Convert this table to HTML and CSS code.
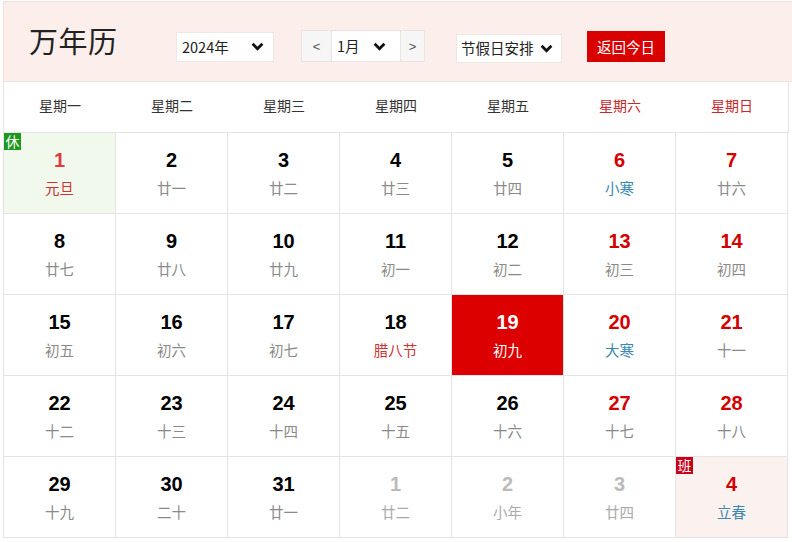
FILE: index.html
```html
<!DOCTYPE html>
<html lang="zh">
<head>
<meta charset="utf-8">
<link rel="stylesheet" href="styles.css">
</head>
<body>
<div class="cal">
  <div class="head">
    <div class="title">万年历</div>
    <div class="sel year"><span>2024年</span><svg class="chev" viewBox="0 0 12 8"><path d="M1.5 1.5 L6 6 L10.5 1.5"/></svg></div>
    <div class="group">
      <div class="arrow">&lt;</div>
      <div class="sel month"><span>1月</span><svg class="chev" viewBox="0 0 12 8"><path d="M1.5 1.5 L6 6 L10.5 1.5"/></svg></div>
      <div class="arrow">&gt;</div>
    </div>
    <div class="sel holiday"><span>节假日安排</span><svg class="chev" viewBox="0 0 12 8"><path d="M1.5 1.5 L6 6 L10.5 1.5"/></svg></div>
    <div class="today-btn">返回今日</div>
  </div>
  <div class="week">
    <div>星期一</div><div>星期二</div><div>星期三</div><div>星期四</div><div>星期五</div><div class="we">星期六</div><div class="we">星期日</div>
  </div>
  <div class="days">
    <div class="d rest"><span class="badge xiu">休</span><b class="hol">1</b><i class="fest">元旦</i></div>
    <div class="d"><b>2</b><i>廿一</i></div>
    <div class="d"><b>3</b><i>廿二</i></div>
    <div class="d"><b>4</b><i>廿三</i></div>
    <div class="d"><b>5</b><i>廿四</i></div>
    <div class="d wk"><b>6</b><i class="term">小寒</i></div>
    <div class="d wk"><b>7</b><i>廿六</i></div>

    <div class="d"><b>8</b><i>廿七</i></div>
    <div class="d"><b>9</b><i>廿八</i></div>
    <div class="d"><b>10</b><i>廿九</i></div>
    <div class="d"><b>11</b><i>初一</i></div>
    <div class="d"><b>12</b><i>初二</i></div>
    <div class="d wk"><b>13</b><i>初三</i></div>
    <div class="d wk"><b>14</b><i>初四</i></div>

    <div class="d"><b>15</b><i>初五</i></div>
    <div class="d"><b>16</b><i>初六</i></div>
    <div class="d"><b>17</b><i>初七</i></div>
    <div class="d"><b>18</b><i class="fest">腊八节</i></div>
    <div class="d cur"><b>19</b><i>初九</i></div>
    <div class="d wk"><b>20</b><i class="term">大寒</i></div>
    <div class="d wk"><b>21</b><i>十一</i></div>

    <div class="d"><b>22</b><i>十二</i></div>
    <div class="d"><b>23</b><i>十三</i></div>
    <div class="d"><b>24</b><i>十四</i></div>
    <div class="d"><b>25</b><i>十五</i></div>
    <div class="d"><b>26</b><i>十六</i></div>
    <div class="d wk"><b>27</b><i>十七</i></div>
    <div class="d wk"><b>28</b><i>十八</i></div>

    <div class="d"><b>29</b><i>十九</i></div>
    <div class="d"><b>30</b><i>二十</i></div>
    <div class="d"><b>31</b><i>廿一</i></div>
    <div class="d other"><b>1</b><i>廿二</i></div>
    <div class="d other"><b>2</b><i>小年</i></div>
    <div class="d other"><b>3</b><i>廿四</i></div>
    <div class="d work wk"><span class="badge ban">班</span><b>4</b><i class="term">立春</i></div>
  </div>
</div>
</body>
</html>
```

FILE: styles.css
```css
html, body {
  margin: 0;
  padding: 0;
  background: #fff;
  overflow: hidden;
}
body {
  width: 792px;
  height: 542px;
  font-family: "Noto Sans CJK SC", "Liberation Sans", sans-serif;
  color: #333;
}
.cal {
  margin: 1px 0 0 3px;
  width: 785px;
}
.head {
  box-sizing: border-box;
  width: 800px;
  height: 81px;
  background: #fbeeeb;
  border: 1px solid #f1e2df;
  border-right: none;
  display: flex;
  align-items: center;
  padding: 10px 0 0 25px;
}
.title {
  font-size: 29px;
  color: #222;
  line-height: 40px;
  margin-top: -13px;
  width: 147px;
  letter-spacing: 0.5px;
}
.sel {
  box-sizing: border-box;
  background: #fff;
  height: 30px;
  display: flex;
  align-items: center;
  justify-content: space-between;
  font-size: 14px;
  color: #222;
  padding: 0 9px 0 5px;
}
.sel span { line-height: 20px; }
.chev {
  width: 13px;
  height: 9px;
  fill: none;
  stroke: #111;
  stroke-width: 2.6;
}
.year {
  width: 98px;
  border: 1px solid #f0e6e4;
  font-size: 14.5px;
}
.group {
  margin-left: 27px;
  display: flex;
  height: 30px;
  border: 1px solid #ebe4e3;
  margin-top: -1px;
}
.arrow {
  width: 29px;
  background: #f6f6f6;
  color: #555;
  font-size: 13px;
  display: flex;
  align-items: center;
  justify-content: center;
  font-family: "Liberation Sans", sans-serif;
}
.arrow:last-child { width: 23px; }
.month {
  width: 70px;
  height: 30px;
  border-left: 1px solid #ebe4e3;
  border-right: 1px solid #ebe4e3;
  padding: 0 14px 0 5px;
  font-size: 14.5px;
}
.holiday {
  margin-left: 31px;
  width: 106px;
  height: 29px;
  margin-top: 3px;
  border: 1px solid #f0e6e4;
  font-size: 14.5px;
  padding: 0 8px 0 4px;
}
.today-btn {
  margin-left: 25px;
  width: 78px;
  height: 31px;
  background: #d90000;
  color: #fff;
  font-size: 14.5px;
  display: flex;
  align-items: center;
  justify-content: center;
}
.week {
  display: grid;
  grid-template-columns: repeat(7, 112px);
  border-left: 1px solid #e4e4e4;
  border-right: 1px solid #e4e4e4;
  border-bottom: 1px solid #e4e4e4;
  height: 50px;
  width: 784px;
  box-sizing: content-box;
}
.week div {
  display: flex;
  align-items: center;
  justify-content: center;
  font-size: 14px;
  color: #333;
  padding-bottom: 5px;
}
.week .we { color: #c8282c; }
.days {
  display: grid;
  grid-template-columns: repeat(7, 112px);
  grid-auto-rows: 81px;
  border-left: 1px solid #e4e4e4;
  width: 784px;
}
.d {
  position: relative;
  box-sizing: border-box;
  border-right: 1px solid #e4e4e4;
  border-bottom: 1px solid #e4e4e4;
  display: flex;
  flex-direction: column;
  align-items: center;
  padding-top: 15px;
}
.d b {
  font-family: "Liberation Sans", sans-serif;
  font-weight: bold;
  font-size: 20px;
  line-height: 24px;
  color: #000;
}
.d i {
  font-style: normal;
  font-size: 14.5px;
  line-height: 20px;
  margin-top: 6px;
  color: #8a8a8a;
}
.d.wk b { color: #d40000; }
.d .hol { color: #e23a3e; }
.d .fest { color: #cc3333; }
.d .term { color: #3a87b0; }
.d.rest { background: #f1f9ec; }
.d.work { background: #fbf1ee; }
.d.cur { background: #dd0000; }
.d.cur b, .d.cur i { color: #fff; }
.d.other b { color: #bbb; }
.d.other i { color: #aaa; }
.badge {
  position: absolute;
  left: 0;
  top: 0;
  width: 17px;
  height: 17px;
  color: #fff;
  font-size: 14px;
  line-height: 17px;
  text-align: center;
}
.xiu { background: #1d9a1d; }
.ban { background: #c9001a; }
```
